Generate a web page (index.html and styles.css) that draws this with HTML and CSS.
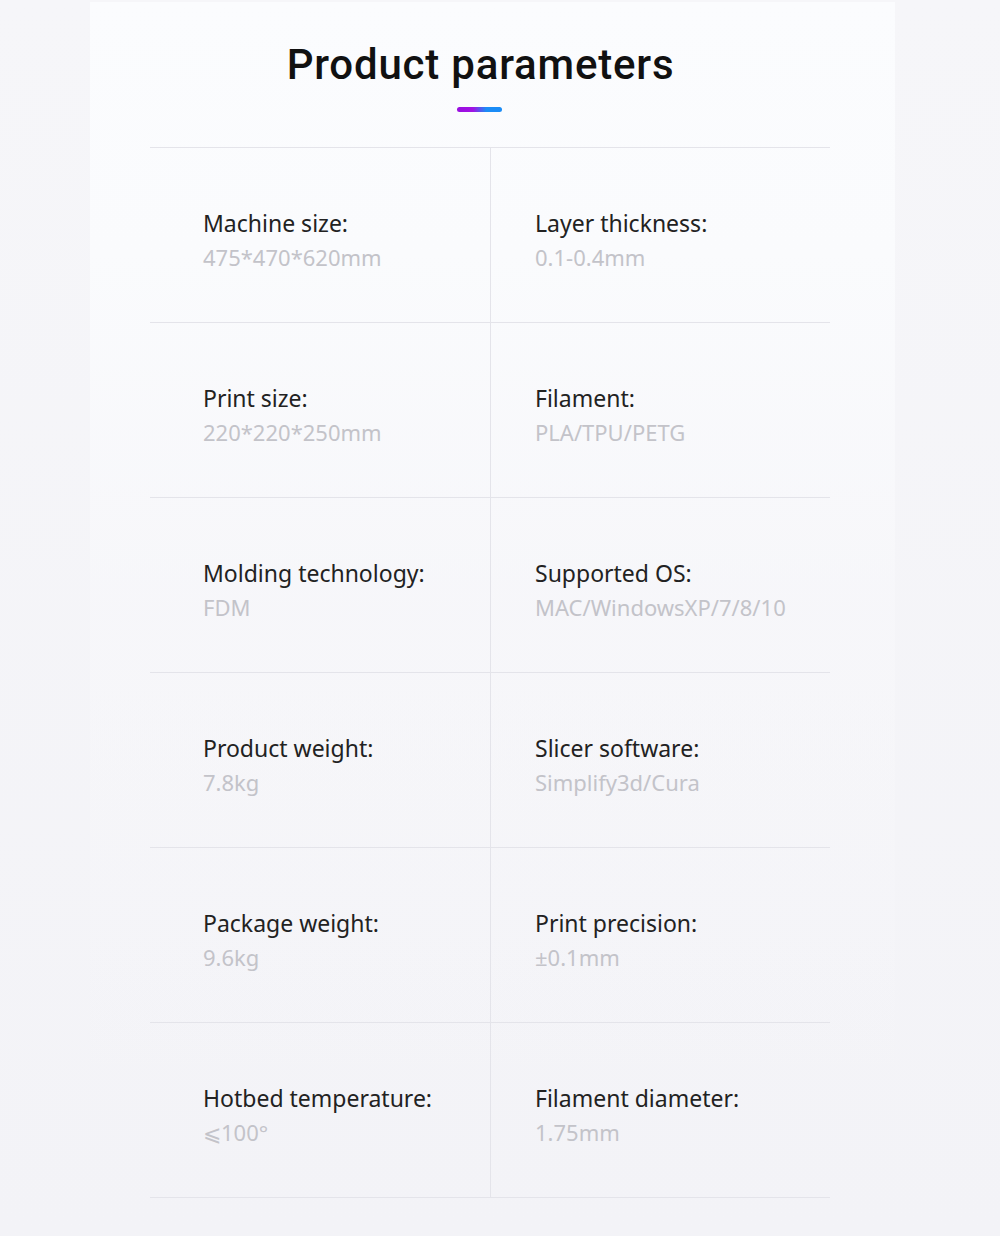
FILE: index.html
```html
<!DOCTYPE html>
<html lang="en">
<head>
    <meta charset="UTF-8">
    <meta name="viewport" content="width=device-width, initial-scale=1.0">
    <title>Product parameters</title>
    <link rel="stylesheet" href="styles.css">
</head>
<body>
    <div class="page">
        <div class="sheet">
            <h2>Product parameters</h2>
            <div class="bar"></div>

            <div class="params">
                <div class="cell left">
                    <div class="label">Machine size:</div>
                    <div class="value">475*470*620mm</div>
                </div>
                <div class="cell right">
                    <div class="label">Layer thickness:</div>
                    <div class="value">0.1-0.4mm</div>
                </div>

                <div class="cell left">
                    <div class="label">Print size:</div>
                    <div class="value">220*220*250mm</div>
                </div>
                <div class="cell right">
                    <div class="label">Filament:</div>
                    <div class="value">PLA/TPU/PETG</div>
                </div>

                <div class="cell left">
                    <div class="label">Molding technology:</div>
                    <div class="value">FDM</div>
                </div>
                <div class="cell right">
                    <div class="label">Supported OS:</div>
                    <div class="value">MAC/WindowsXP/7/8/10</div>
                </div>

                <div class="cell left">
                    <div class="label">Product weight:</div>
                    <div class="value">7.8kg</div>
                </div>
                <div class="cell right">
                    <div class="label">Slicer software:</div>
                    <div class="value">Simplify3d/Cura</div>
                </div>

                <div class="cell left">
                    <div class="label">Package weight:</div>
                    <div class="value">9.6kg</div>
                </div>
                <div class="cell right">
                    <div class="label">Print precision:</div>
                    <div class="value">±0.1mm</div>
                </div>

                <div class="cell left">
                    <div class="label">Hotbed temperature:</div>
                    <div class="value">⩽100°</div>
                </div>
                <div class="cell right">
                    <div class="label">Filament diameter:</div>
                    <div class="value">1.75mm</div>
                </div>
            </div>
        </div>
    </div>
</body>
</html>
```

FILE: styles.css
```css
body {
    margin: 0;
    font-family: "Noto Sans", "Open Sans", sans-serif;
    background-color: #f4f4f8;
}

.page {
    width: 1000px;
    height: 1236px;
    background: linear-gradient(#f6f6f9, #f3f3f7);
    padding-top: 2px;
    box-sizing: border-box;
}

.sheet {
    width: 805px;
    height: 1234px;
    margin-left: 90px;
    padding-top: 38px;
    box-sizing: border-box;
    background: linear-gradient(#fbfcfe 0, #fafbfd 250px, rgba(248, 248, 251, 0.6) 600px, rgba(244, 244, 248, 0) 1100px);
}

.sheet h2 {
    margin: 0;
    padding-right: 24px;
    text-align: center;
    font-family: Roboto, "Liberation Sans", sans-serif;
    font-size: 42px;
    font-weight: 500;
    line-height: 50px;
    color: #111;
    letter-spacing: 0.8px;
}

.bar {
    width: 45px;
    height: 5px;
    margin: 17px 0 0 367px;
    border-radius: 3px;
    background: linear-gradient(90deg, #9a0ee0 0, #a012e4 35%, #1b8cf6 65%, #1b8cf6 100%);
}

.params {
    width: 680px;
    margin: 35px 0 0 60px;
    display: grid;
    grid-template-columns: 341px 339px;
    border-top: 1px solid #e4e4ea;
}

.cell {
    height: 175px;
    box-sizing: border-box;
    border-bottom: 1px solid #e4e4ea;
    padding-top: 58px;
}

.cell.left {
    padding-left: 53px;
    border-right: 1px solid #e4e4ea;
}

.cell.right {
    padding-left: 44px;
}

.label {
    font-size: 23px;
    line-height: 34px;
    color: #222;
}

.value {
    font-size: 22px;
    line-height: 34px;
    color: #c3c3c9;
}
```
